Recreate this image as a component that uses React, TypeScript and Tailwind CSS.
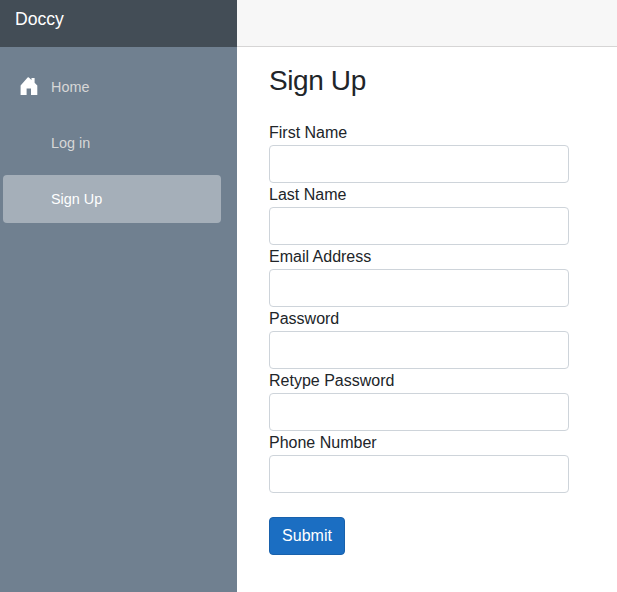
import React from "react";

const fields = ["First Name", "Last Name", "Email Address", "Password", "Retype Password", "Phone Number"];

function HomeIcon() {
  return (
    <svg className="-mt-[2px]" width="20" height="20" viewBox="0 0 20 20" fill="#fff">
      <path d="M9.6 1.3 L12.5 4 V2 H15.6 V6.8 L18.3 9.6 V19 H12 V12.5 H7.6 V19 H1.6 V9.6 L8.6 1.6 Q9.2 .8 9.9 1.5Z" />
    </svg>
  );
}

function NavItem({ label, icon, active }: { label: string; icon?: React.ReactNode; active?: boolean }) {
  return (
    <a
      className={`flex h-12 w-[218px] items-center rounded pl-4 text-[14.4px] ${
        active ? "bg-[#a5afb9] text-white" : "text-[#d7d7d7]"
      }`}
    >
      <span className="flex w-8 items-center">{icon}</span>
      <span className="pt-[2px]">{label}</span>
    </a>
  );
}

export default function App() {
  return (
    <div className="flex h-[592px] w-[617px] overflow-hidden bg-white font-['Liberation_Sans',Arial,sans-serif] text-base text-[#212529]">
      <aside className="w-[237px] shrink-0 bg-[#708090]">
        <div className="h-[47px] bg-[#434d56] pt-[6px] pl-[15px] text-[17.6px] leading-[27px] text-white">Doccy</div>
        <nav className="flex flex-col gap-2 pt-4 pl-[3px]">
          <NavItem label="Home" icon={<HomeIcon />} />
          <NavItem label="Log in" />
          <NavItem label="Sign Up" active />
        </nav>
      </aside>
      <main className="flex-1">
        <div className="h-[47px] border-b border-[#d6d5d5] bg-[#f7f7f7]" />
        <form className="pt-[17px] pl-8" onSubmit={(e) => e.preventDefault()}>
          <h1 className="mb-[25px] text-[28px] leading-[33px] tracking-[-0.4px]">Sign Up</h1>
          {fields.map((f) => (
            <label key={f} className="block h-[62px]">
              <span className="block h-[23px] leading-[22px]">{f}</span>
              <input className="block h-[38px] w-[300px] rounded border border-[#ced4da] bg-white px-3" />
            </label>
          ))}
          <button className="mt-[23px] block h-[38px] w-[76px] rounded border border-[#1861ac] bg-[#1b6ec2] leading-6 text-white">
            Submit
          </button>
        </form>
      </main>
    </div>
  );
}
